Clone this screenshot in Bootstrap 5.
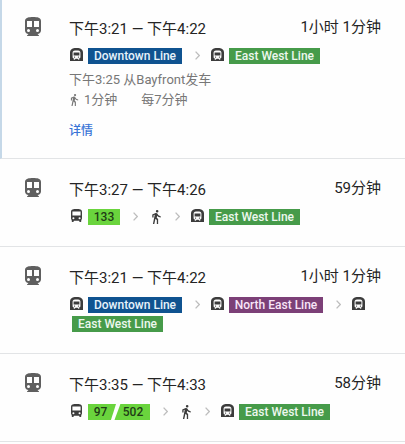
<!DOCTYPE html>
<html lang="zh-CN">
<head>
<meta charset="utf-8">
<meta name="viewport" content="width=device-width, initial-scale=1">
<title>路线</title>
<link href="https://cdn.jsdelivr.net/npm/bootstrap@5.3.0/dist/css/bootstrap.min.css" rel="stylesheet">
<style>
body{font-family:Roboto,"Noto Sans CJK SC",sans-serif;color:#242424;background:#fefefe;overflow:hidden}
svg{display:block;fill:currentColor}
.trip{height:88px;padding:19px 24px 0 25px;border-bottom:1px solid #e2e4e6;white-space:nowrap}
.trip-open{height:159px;padding:17px 24px 0 23px;border-left:2px solid #c5d8e8}
.trip-tall{height:107px}
.mode{width:16px;height:19px;color:#5f5f5f}
.trip-body{margin-left:28px;width:0}
.times{font-size:15px;line-height:24px;height:31px}
.dur{font-size:15px;line-height:20px}
.legs{height:16px;color:#3c3c3c}
.glyph{width:15px;margin:0 4px 3px 0;display:flex;justify-content:center;flex:none}
.glyph-walk{width:9px;margin:0 1px 1px 4px;flex:none}
.sep{width:5px;margin:0 10px 2px 13px;color:#bdbdbd;fill:none;stroke:currentColor;stroke-width:1.3;flex:none}
.line-tag{height:16px;line-height:16px;font-size:12px;font-weight:500;text-align:center;color:#edf7ee;flex:none}
.dt{background:#0f5390;width:94px;color:#e6f2fb}
.ew{background:#469b4a;width:91px}
.ne{background:#7c4077;width:94px;color:#f8e5f8}
.bus{background:#6ad43d;color:#1f3c16;width:32px}
.bus-l{width:28px;clip-path:polygon(0 0,100% 0,82% 100%,0 100%);padding-right:3px}
.bus-r{width:37px;margin-left:-3px;clip-path:polygon(20% 0,100% 0,100% 100%,4% 100%);padding-left:3px}
.second{margin:3px 0 0 3px}
.note{font-size:13px;line-height:20px;color:#777;padding-top:6px}
.more{font-size:12px;line-height:18px;color:#3974d6;font-weight:500}
</style>
<script src="https://cdn.jsdelivr.net/npm/bootstrap@5.3.0/dist/js/bootstrap.bundle.min.js"></script>
</head>
<body>
<svg width="0" height="0" class="position-absolute">
<defs>
<symbol id="train" viewBox="4 2 16 19"><path d="M12 2c-4 0-8 .5-8 4v9.500C4 17.430 5.570 19 7.500 19L6 20.500v.5h12v-.5L16.500 19c1.930 0 3.500-1.570 3.500-3.500V6c0-3.500-3.580-4-8-4zM7.500 17a1.500 1.500 0 1 1 0-3 1.500 1.500 0 0 1 0 3zM11 12H6V6h5zm5.500 5a1.500 1.500 0 1 1 0-3 1.500 1.500 0 0 1 0 3zM18 12h-5V6h5z"/></symbol>
<symbol id="subway" viewBox="2 2 20 20"><path fill-rule="evenodd" d="M17.800 2.800C16 2.090 13.860 2 12 2s-4 .09-5.800.8C3.530 3.840 2 6.050 2 8.860V22h20V8.860c0-2.810-1.530-5.020-4.200-6.060zM18 15.880c0 1.450-1.180 2.620-2.630 2.620l1.130 1.120V20H15l-1.500-1.500h-2.830L9.170 20H7.500v-.38l1.120-1.120C7.180 18.500 6 17.320 6 15.880V9c0-2.630 3-3 6-3 3.320 0 6 .38 6 3zM7.500 9v4.500h9V9zM9 15a1 1 0 1 0 0 2 1 1 0 0 0 0-2zm6 0a1 1 0 1 0 0 2 1 1 0 0 0 0-2z"/></symbol>
<symbol id="bus" viewBox="4 2 16 19"><path d="M4 16c0 .88.39 1.670 1 2.220V20c0 .55.45 1 1 1h1c.55 0 1-.45 1-1v-1h8v1c0 .55.45 1 1 1h1c.55 0 1-.45 1-1v-1.780c.61-.55 1-1.340 1-2.220V6c0-3.500-3.580-4-8-4s-8 .5-8 4zm3.500 1a1.500 1.500 0 1 1 0-3 1.500 1.500 0 0 1 0 3zm9 0a1.500 1.500 0 1 1 0-3 1.500 1.500 0 0 1 0 3zM18 11.500H6V5.500h12z"/></symbol>
<symbol id="walk" viewBox="6 1.500 13 21.500"><path d="M13.500 5.500a2 2 0 1 0 0-4 2 2 0 0 0 0 4zM9.800 8.900L7 23h2.100l1.800-8 2.100 2v6h2v-7.500l-2.100-2 .6-3C14.800 12 16.800 13 19 13v-2c-1.900 0-3.500-1-4.300-2.400l-1-1.600c-.4-.6-1-1-1.700-1-.3 0-.5.1-.8.1L6 8.300V13h2V9.600z"/></symbol>
<symbol id="next" viewBox="0 0 5 9"><path d="M.6.600L4.300 4.500.600 8.400"/></symbol>
</defs>
</svg>
<main>
<section class="trip trip-open d-flex align-items-start">
<svg class="mode flex-shrink-0"><use href="#train"/></svg>
<div class="trip-body flex-grow-1">
<div class="d-flex justify-content-between times"><span>下午3:21 — 下午4:22</span><span class="dur">1小时 1分钟</span></div>
<div class="legs d-flex align-items-center"><span class="glyph"><svg width="13" height="13"><use href="#subway"/></svg></span><span class="line-tag dt">Downtown Line</span><svg class="sep" height="9"><use href="#next"/></svg><span class="glyph"><svg width="13" height="13"><use href="#subway"/></svg></span><span class="line-tag ew">East West Line</span></div>
<div class="note"><div>下午3:25 从Bayfront发车</div>
<div class="d-flex align-items-center"><svg class="me-1" width="11" height="12"><use href="#walk"/></svg><span>1分钟</span><span class="ms-4">每7分钟</span></div></div>
<div class="more mt-2 pt-1">详情</div>
</div>
</section>
<section class="trip d-flex align-items-start">
<svg class="mode flex-shrink-0"><use href="#train"/></svg>
<div class="trip-body flex-grow-1">
<div class="d-flex justify-content-between times"><span>下午3:27 — 下午4:26</span><span class="dur">59分钟</span></div>
<div class="legs d-flex align-items-center"><span class="glyph"><svg width="11" height="13"><use href="#bus"/></svg></span><span class="line-tag bus">133</span><svg class="sep" height="9"><use href="#next"/></svg><svg class="glyph-walk" height="14"><use href="#walk"/></svg><svg class="sep" height="9"><use href="#next"/></svg><span class="glyph"><svg width="13" height="13"><use href="#subway"/></svg></span><span class="line-tag ew">East West Line</span></div>
</div>
</section>
<section class="trip trip-tall d-flex align-items-start">
<svg class="mode flex-shrink-0"><use href="#train"/></svg>
<div class="trip-body flex-grow-1">
<div class="d-flex justify-content-between times"><span>下午3:21 — 下午4:22</span><span class="dur">1小时 1分钟</span></div>
<div class="legs d-flex align-items-center"><span class="glyph"><svg width="13" height="13"><use href="#subway"/></svg></span><span class="line-tag dt">Downtown Line</span><svg class="sep" height="9"><use href="#next"/></svg><span class="glyph"><svg width="13" height="13"><use href="#subway"/></svg></span><span class="line-tag ne">North East Line</span><svg class="sep" height="9"><use href="#next"/></svg><span class="glyph"><svg width="13" height="13"><use href="#subway"/></svg></span></div>
<div class="line-tag ew second">East West Line</div>
</div>
</section>
<section class="trip d-flex align-items-start">
<svg class="mode flex-shrink-0"><use href="#train"/></svg>
<div class="trip-body flex-grow-1">
<div class="d-flex justify-content-between times"><span>下午3:35 — 下午4:33</span><span class="dur">58分钟</span></div>
<div class="legs d-flex align-items-center"><span class="glyph"><svg width="11" height="13"><use href="#bus"/></svg></span><span class="line-tag bus bus-l">97</span><span class="line-tag bus bus-r">502</span><svg class="sep" height="9"><use href="#next"/></svg><svg class="glyph-walk" height="14"><use href="#walk"/></svg><svg class="sep" height="9"><use href="#next"/></svg><span class="glyph"><svg width="13" height="13"><use href="#subway"/></svg></span><span class="line-tag ew">East West Line</span></div>
</div>
</section>
</main>
</body>
</html>
